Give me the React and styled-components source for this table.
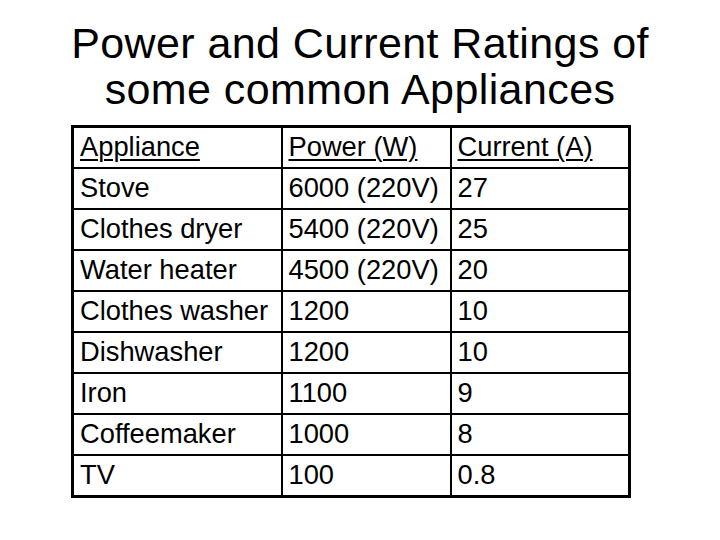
import React from "react";
import styled, { createGlobalStyle } from "styled-components";

const GlobalStyle = createGlobalStyle`
  html, body {
    margin: 0;
    padding: 0;
    background: #fff;
  }
  body {
    font-family: "Liberation Sans", Arial, sans-serif;
    color: #000;
  }
`;

const Slide = styled.div`
  width: 720px;
  height: 540px;
  display: flex;
  flex-direction: column;
  align-items: center;
  background: #fff;
`;

const Title = styled.h1`
  margin: 20px 0 0 0;
  font-size: 43px;
  font-weight: normal;
  line-height: 46px;
  text-align: center;
  letter-spacing: 0.4px;
`;

const Table = styled.table`
  align-self: flex-start;
  margin: 13px 0 0 71px;
  border-collapse: collapse;
  border: 3px solid #000;
  table-layout: fixed;
  width: 557px;
`;

const Cell = styled.td`
  border: 2px solid #000;
  height: 37px;
  padding: 0 0 2px 6px;
  font-size: 27.3px;
  line-height: 37px;
  white-space: nowrap;
  text-decoration: ${(p) => (p.$head ? "underline" : "none")};
  text-decoration-thickness: 2px;
  text-underline-offset: 3px;
`;

const rows = [
  ["Stove", "6000 (220V)", "27"],
  ["Clothes dryer", "5400 (220V)", "25"],
  ["Water heater", "4500 (220V)", "20"],
  ["Clothes washer", "1200", "10"],
  ["Dishwasher", "1200", "10"],
  ["Iron", "1100", "9"],
  ["Coffeemaker", "1000", "8"],
  ["TV", "100", "0.8"],
];

export default function App() {
  return (
    <Slide>
      <GlobalStyle />
      <Title>
        Power and Current Ratings of
        <br />
        some common Appliances
      </Title>
      <Table>
        <colgroup>
          <col style={{ width: 209 }} />
          <col style={{ width: 169 }} />
          <col style={{ width: 179 }} />
        </colgroup>
        <tbody>
          <tr>
            <Cell $head>Appliance</Cell>
            <Cell $head>Power (W)</Cell>
            <Cell $head>Current (A)</Cell>
          </tr>
          {rows.map((r) => (
            <tr key={r[0]}>
              {r.map((v, i) => (
                <Cell key={i}>{v}</Cell>
              ))}
            </tr>
          ))}
        </tbody>
      </Table>
    </Slide>
  );
}
